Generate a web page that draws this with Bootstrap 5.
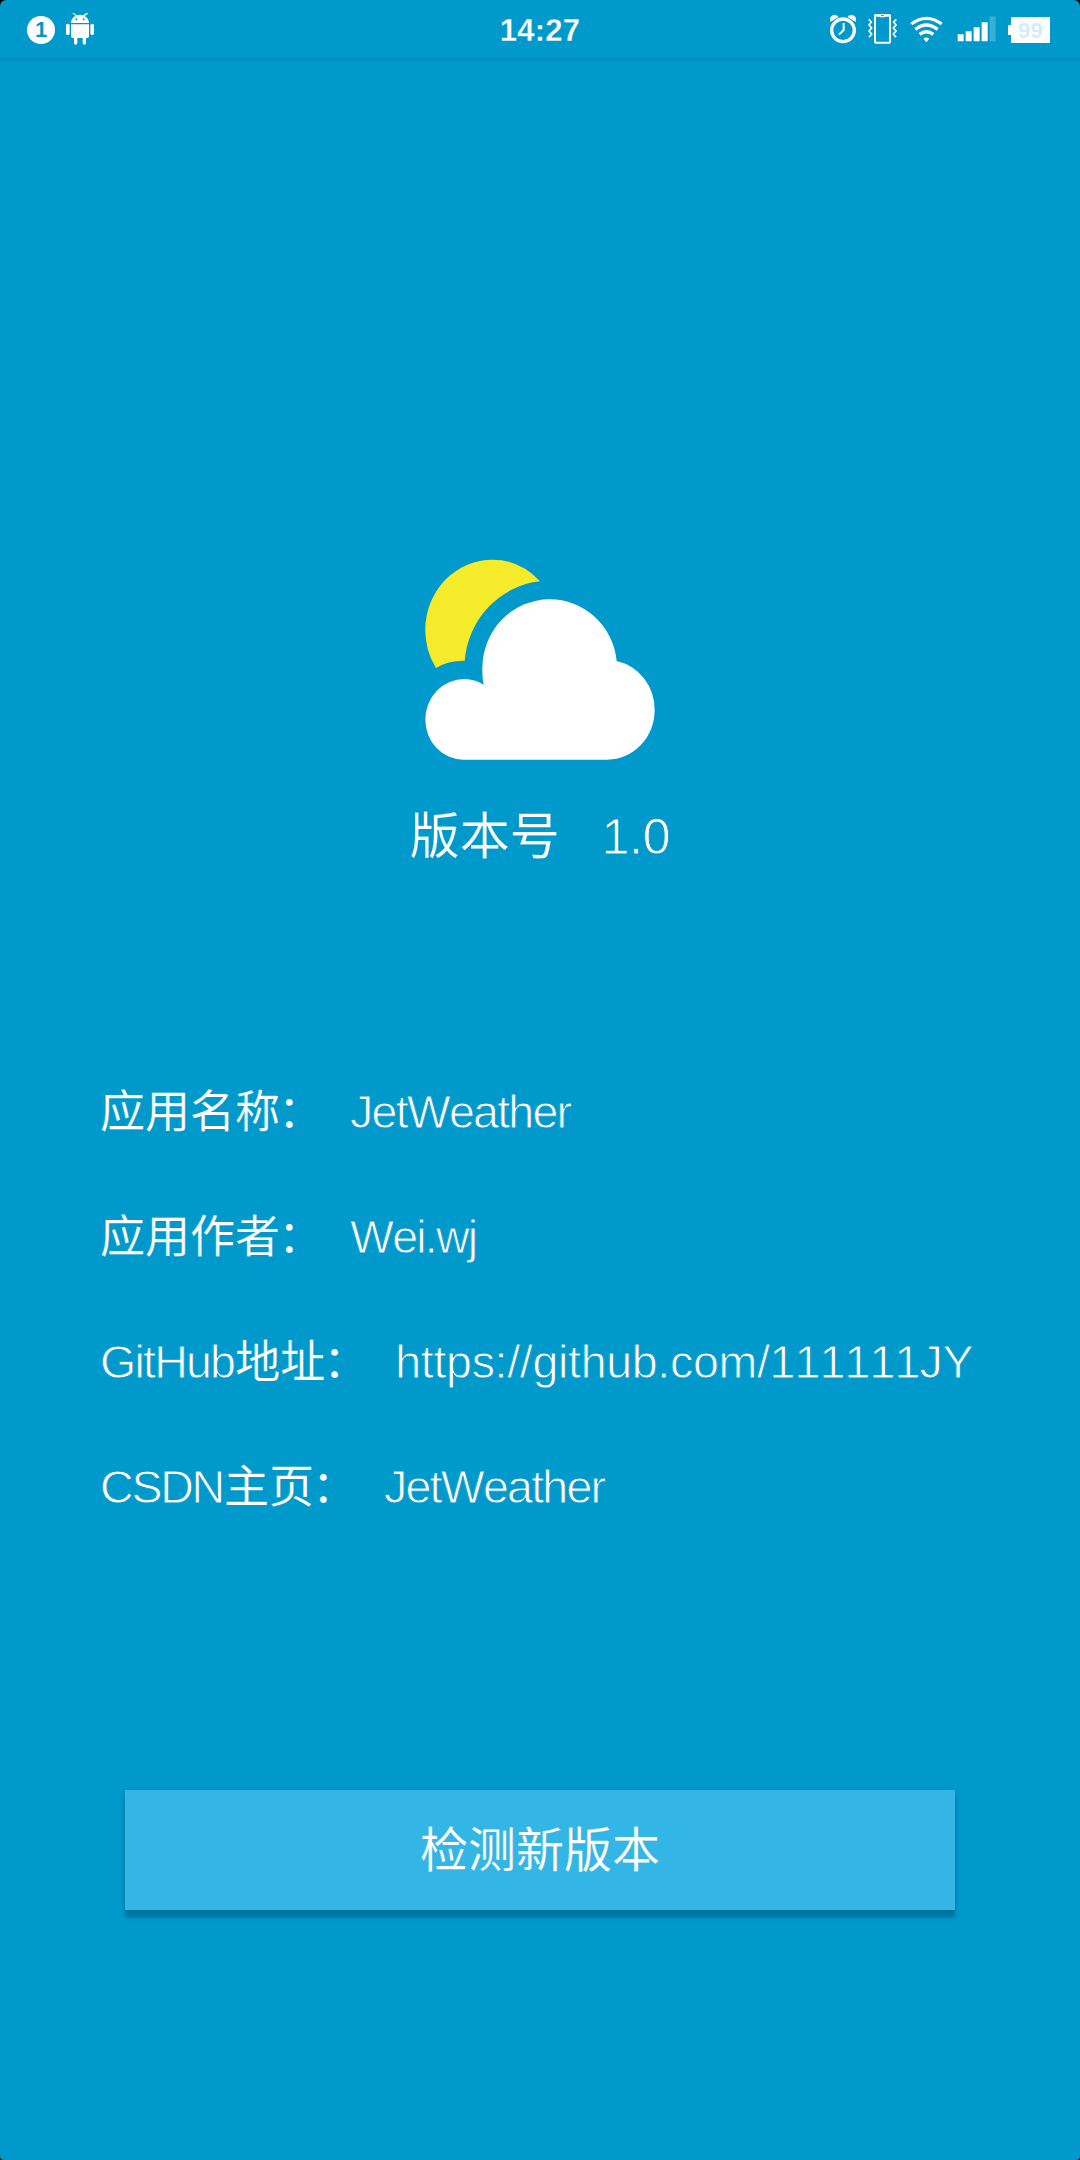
<!DOCTYPE html>
<html lang="zh-CN">
<head>
<meta charset="utf-8">
<meta name="viewport" content="width=device-width, initial-scale=1">
<title>JetWeather</title>
<link rel="stylesheet" href="https://cdn.jsdelivr.net/npm/bootstrap@5.3.0/dist/css/bootstrap.min.css">
<style>
  :root { --sky: #0099cc; --sky-light: #33b5e5; }
  body { background: #000; font-family: "Liberation Sans", "Noto Sans CJK SC", sans-serif; color: #fff; }
  .app { height: 2160px; background: var(--sky); border-radius: 6px 6px 4px 4px; overflow: hidden; }
  .status { height: 60px; border-bottom: 2px solid #028cbd; padding: 0 30px 0 27px; }
  .status > div { flex: 1 1 0; }
  .clock { font-size: 31px; line-height: 58px; font-weight: 700; letter-spacing: .2px; padding: 4px 0 0 3px; -webkit-text-stroke: .3px var(--sky); }
  .notice { width: 28px; height: 28px; font-size: 22px; line-height: 28px; color: var(--sky); font-weight: 700; margin-top: 2px; }
  .battery { font: 700 22px/27px "Liberation Sans", sans-serif; color: #d3edf7; width: 39px; height: 26px; letter-spacing: .3px; margin: 1px 0 0 14px; background: #fff; border-radius: 1px; }
  .battery::before { content: ""; position: absolute; left: -3px; top: 8px; width: 4px; height: 10px; background: #fff; }
  .cjk { font-family: "Noto Sans CJK SC", sans-serif; font-weight: 400; -webkit-text-stroke: .2px var(--sky); }
  .colon { display: inline-block; line-height: 1; margin: 0 2px 0 -2px; }
  /* a rim in the background colour slims the strokes to a light weight */
  .thin { font-family: "Liberation Sans", sans-serif; -webkit-text-stroke: .9px var(--sky); white-space: nowrap; font-kerning: none; }
  .hero { padding-top: 480px; }
  .version { font-size: 50px; line-height: 80px; height: 80px; margin-top: 16px; }
  .version .cjk { line-height: 72px; }
  .version .thin { margin-left: 42px; font-size: 50px; letter-spacing: -.3px; line-height: 82px; }
  .info { padding: 174px 0 0 100px; font-size: 46.5px; }
  .info li { height: 125px; line-height: 125px; }
  .info .cjk { font-size: 45px; line-height: 117px; }
  .info .thin { letter-spacing: -1.75px; }
  .info .thin + .cjk { margin-left: 1px; }
  .info .cjk + .thin { margin-left: 25px; }
  .info .url { letter-spacing: -.3px; }
  .info .digits { letter-spacing: -.86px; }
  .info .csdn { letter-spacing: -2.2px; }
  .check { width: 830px; height: 120px; margin-top: 240px; padding: 0 0 8px; font-size: 48px; line-height: 111px; background: var(--sky-light); color: #fff; -webkit-text-stroke-color: var(--sky-light); box-shadow: 0 8px 3px rgba(0,50,75,.3), 0 1px 5px rgba(0,50,75,.22); }
</style>
</head>
<body>
<main class="app">
  <header class="status d-flex align-items-center">
    <div class="d-flex align-items-center">
      <span class="notice rounded-circle bg-white text-center">1</span>
      <svg class="ms-2" width="34" height="36" viewBox="189 36 102 108" fill="#fff">
        <path d="M213 72C213 60 219 54 227 50L217 43L220 41L231 49Q240 46 249 49L261 41L264 44L254 51Q267 59 267 72Z"/>
        <path d="M213 76H267V112Q267 117 262 117H258V132Q258 137 253 137Q248 137 248 132V117H232V132Q232 137 227 137Q222 137 222 132V117H218Q213 117 213 112Z"/>
        <rect x="198" y="74" width="11" height="34" rx="5.5"/><rect x="271" y="74" width="11" height="34" rx="5.5"/>
        <circle cx="229" cy="61" r="3" fill="#09c"/><circle cx="251" cy="61" r="3" fill="#09c"/>
      </svg>
    </div>
    <div class="clock text-center">14:27</div>
    <div class="d-flex align-items-center justify-content-end">
      <svg width="30" height="30" viewBox="54 44 90 90" fill="none" stroke="#fff">
        <path d="M61 68Q56 48 74 47Q82 47 86 53ZM137 68Q142 48 124 47Q116 47 112 53Z" fill="#fff" stroke="none"/>
        <circle cx="99" cy="93" r="41" fill="#09c" stroke="none"/>
        <circle cx="99" cy="93" r="34" stroke-width="10"/>
        <path d="M101 71V92L87 106" stroke-width="6"/>
      </svg>
      <svg class="ms-2" width="34" height="32" viewBox="171 42 102 96" fill="none" stroke="#fff">
        <rect x="198" y="48" width="45" height="83" rx="2" stroke-width="6"/><path d="M197 50H244M213 51H228" stroke-width="7"/><path d="M216 49H225" stroke="#09c" stroke-width="3"/>
        <path d="M179 61L187 69L180 78L188 87L180 96L188 105L180 115M262 61L254 69L261 78L253 87L261 96L253 105L261 115" stroke-width="5"/>
      </svg>
      <svg class="ms-2" width="38" height="32" viewBox="297 42 114 96" fill="none" stroke="#fff" stroke-width="10">
        <path d="M307 75Q352 41 398 75M319 91Q352 65 386 91M332 106Q352 90 373 106"/>
        <path d="M343 119Q352 112 361 119L352 130Z" fill="#fff" stroke="none"/>
      </svg>
      <svg style="margin-left:11px" width="40" height="28" viewBox="439 47 120 84" fill="#fff">
        <path d="M441 105H459V126H441ZM465 96H483V126H465ZM489 84H507V126H489ZM513 69H531V126H513Z"/>
        <path d="M537 51H555V126H537Z" opacity=".22"/>
      </svg>
      <span class="battery position-relative text-center">99</span>
    </div>
  </header>

  <section class="hero text-center">
    <svg class="d-block mx-auto" width="280" height="240" viewBox="0 0 840 720">
      <path fill="#f5eb2a" d="M108 384A202 209 0 0 1 76 268A202 209 0 0 1 278 59Q360 59 420 124A254 262 0 0 0 194 362Q145 361 108 384Z"/>
      <path fill="#fff" d="M190 659A115 120 0 0 1 76 538A118 121 0 0 1 194 417Q224 418 251 434Q246 410 247 385A201 207 0 0 1 448 178A201 206 0 0 1 650 363A145 149 0 0 1 764 510A143 149 0 0 1 622 659Z"/>
    </svg>
    <div class="version d-flex justify-content-center"><span class="cjk">版本号</span><span class="thin">1.0</span></div>
  </section>

  <ul class="info list-unstyled mb-0">
    <li class="d-flex"><span class="cjk">应用名称<span class="colon">：</span></span><span class="thin">JetWeather</span></li>
    <li class="d-flex"><span class="cjk">应用作者<span class="colon">：</span></span><span class="thin">Wei.wj</span></li>
    <li class="d-flex"><span class="thin">GitHub</span><span class="cjk">地址<span class="colon">：</span></span><span class="thin url">https://github.com/<span class="digits">111111</span>JY</span></li>
    <li class="d-flex"><span class="thin csdn">CSDN</span><span class="cjk">主页<span class="colon">：</span></span><span class="thin">JetWeather</span></li>
  </ul>

  <button type="button" class="check btn cjk d-block mx-auto border-0 rounded-0">检测新版本</button>
</main>
<script src="https://cdn.jsdelivr.net/npm/bootstrap@5.3.0/dist/js/bootstrap.bundle.min.js"></script>
</body>
</html>
